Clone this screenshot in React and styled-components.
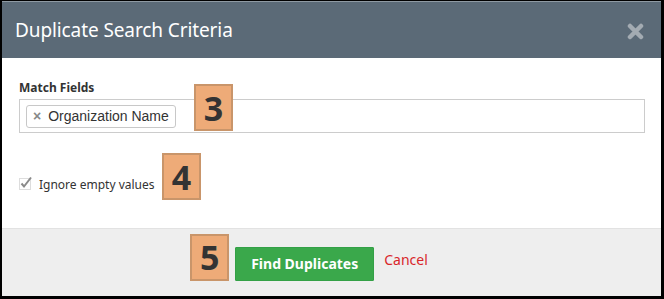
import React from 'react'
import styled, { createGlobalStyle } from 'styled-components'

const GlobalStyle = createGlobalStyle`
  html, body {
    margin: 0;
    padding: 0;
    background: #000;
  }
  body {
    font-family: "Noto Sans", "Open Sans", sans-serif;
  }
`

export const Frame = styled.div`
  width: 664px;
  height: 299px;
  box-sizing: border-box;
  padding: 1px 3px 3px 2px;
  background: #000;
`
export const Dialog = styled.div`
  display: flex;
  flex-direction: column;
  height: 100%;
  background: #fff;
`
export const Header = styled.div`
  display: flex;
  align-items: center;
  justify-content: space-between;
  height: 57px;
  box-sizing: border-box;
  padding: 0 17px 0 13px;
  background: #5b6a77;
  border-top: 1px solid #8e99a2;
`
export const Title = styled.h4`
  margin: 0;
  color: #fff;
  font-size: 19px;
  font-weight: 400;
  letter-spacing: -0.1px;
`
export const CloseBtn = styled.span`
  display: flex;
  width: 17px;
  height: 17px;
  margin-top: 2px;
`
export const Body = styled.div`
  position: relative;
  flex: 1;
  padding: 22px 16px 0 17px;
`
export const Label = styled.label`
  display: block;
  font-size: 12px;
  font-weight: 700;
  color: #333;
  line-height: 16px;
  margin-bottom: 3px;
`
export const TagInput = styled.div`
  display: flex;
  align-items: center;
  height: 34px;
  box-sizing: border-box;
  padding: 0 6px;
  border: 1px solid #ccc;
`
export const Tag = styled.span`
  display: inline-flex;
  align-items: center;
  gap: 7px;
  height: 23px;
  box-sizing: border-box;
  padding: 0 6px 0 6px;
  border: 1px solid #c8c8c8;
  border-radius: 3px;
  font-family: "Liberation Sans", Arial, sans-serif;
  font-size: 14px;
  color: #333;
`
export const TagRemove = styled.span`
  color: #888;
  font-size: 14px;
  font-weight: 700;
`
export const CheckRow = styled.div`
  display: flex;
  align-items: center;
  gap: 6px;
  margin-top: 43px;
  font-size: 12px;
  color: #333;
`
export const Box = styled.span`
  display: flex;
  width: 14px;
  height: 14px;
  margin-top: -4px;
`
export const Badge = styled.div`
  position: absolute;
  left: ${p => p.$left}px;
  top: ${p => p.$top}px;
  width: 39px;
  height: 47px;
  box-sizing: border-box;
  display: flex;
  align-items: center;
  justify-content: center;
  background: #eeab78;
  border: 2px solid #c9956a;
  color: #333;
  font-family: "Noto Sans", sans-serif;
  font-size: 34px;
  font-weight: 700;
`
export const Footer = styled.div`
  display: flex;
  justify-content: center;
  align-items: center;
  height: 68px;
  box-sizing: border-box;
  padding-bottom: 2px;
  background: #eee;
  border-top: 1px solid #e2e2e2;
`
export const Actions = styled.div`
  position: relative;
  display: flex;
  align-items: center;
  gap: 10px;
`
export const PrimaryButton = styled.button`
  height: 34px;
  padding: 0 15px;
  border: 1px solid #33a046;
  border-radius: 1px;
  background: #3aa84b;
  color: #fff;
  font-family: "Noto Sans", sans-serif;
  font-size: 14px;
  font-weight: 700;
  margin-top: 4px;
`
export const LinkButton = styled.a`
  color: #d9262a;
  font-size: 14px;
  margin-top: -4px;
`

const CloseIcon = () => (
  <svg viewBox="0 0 17 17" width="17" height="17">
    <path d="M3 3 L14 14 M14 3 L3 14" stroke="#a3abb2" strokeWidth="4.5" strokeLinecap="round" />
  </svg>
)

const CheckIcon = () => (
  <svg viewBox="0 0 14 14" width="14" height="14">
    <rect x="0.5" y="2.5" width="11" height="11" fill="#fff" stroke="#ddd" />
    <path d="M2.5 7.5 L5 10.5 L12 1.5" fill="none" stroke="#8a8a8a" strokeWidth="2" />
  </svg>
)

export default function App() {
  return (
    <>
      <GlobalStyle />
      <Frame>
        <Dialog>
          <Header>
            <Title>Duplicate Search Criteria</Title>
            <CloseBtn>
              <CloseIcon />
            </CloseBtn>
          </Header>
          <Body>
            <Label>Match Fields</Label>
            <TagInput>
              <Tag>
                <TagRemove>×</TagRemove>
                Organization Name
              </Tag>
            </TagInput>
            <CheckRow>
              <Box>
                <CheckIcon />
              </Box>
              Ignore empty values
            </CheckRow>
            <Badge $left={192} $top={26}>3</Badge>
            <Badge $left={160} $top={95}>4</Badge>
          </Body>
          <Footer>
            <Actions>
              <Badge $left={-45} $top={-9}>5</Badge>
              <PrimaryButton>Find Duplicates</PrimaryButton>
              <LinkButton>Cancel</LinkButton>
            </Actions>
          </Footer>
        </Dialog>
      </Frame>
    </>
  )
}
